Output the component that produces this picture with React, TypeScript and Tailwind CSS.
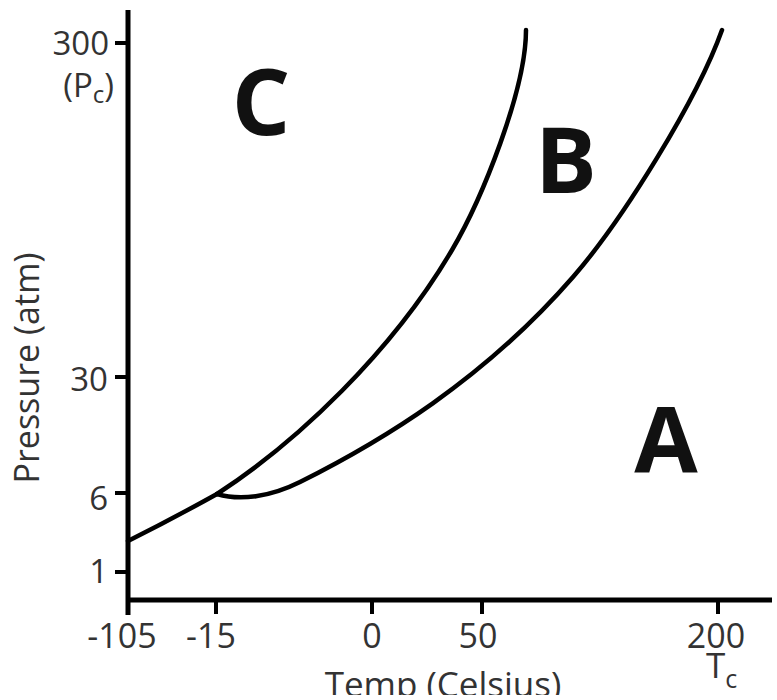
import React from "react";

const leftPath = "M128,541 Q172,519 217,494";
const upperPath = "M217,494 C297,442 392,352 452,250 C482,199 526,90 526,30";
const lowerPath =
  "M217,494 C240,501 270,497 300,482 C380,442 483,380.5 573,277 C623,219.5 697,100 722,30";

export default function App() {
  return (
    <div className="w-[777px] h-[700px] bg-white overflow-hidden">
      <svg
        width={777}
        height={695}
        viewBox="0 0 777 695"
        className="block font-['Open_Sans',sans-serif]"
      >
        {/* axes */}
        <line x1={128} y1={10} x2={128} y2={615} stroke="#000" strokeWidth={5} />
        <line x1={126} y1={600} x2={772} y2={600} stroke="#000" strokeWidth={5} />

        {/* y ticks */}
        {[43, 377, 493, 572].map((y) => (
          <line key={y} x1={115} y1={y} x2={128} y2={y} stroke="#000" strokeWidth={4} />
        ))}
        {/* x ticks */}
        {[216, 372, 482, 718].map((x) => (
          <line key={x} x1={x} y1={600} x2={x} y2={614} stroke="#000" strokeWidth={4} />
        ))}

        {/* curves */}
        <path d={leftPath} fill="none" stroke="#000" strokeWidth={4.5} strokeLinecap="round" />
        <path d={upperPath} fill="none" stroke="#000" strokeWidth={4.5} strokeLinecap="round" />
        <path d={lowerPath} fill="none" stroke="#000" strokeWidth={4.5} strokeLinecap="round" />

        {/* y labels */}
        <g fill="#333" fontSize={33}>
          <text x={109} y={55} textAnchor="end">300</text>
          <text x={114} y={97} textAnchor="end">
            (P<tspan fontSize={24} dy={6}>c</tspan><tspan dy={-6}>)</tspan>
          </text>
          <text x={108} y={391} textAnchor="end">30</text>
          <text x={108} y={510} textAnchor="end">6</text>
          <text x={108} y={583} textAnchor="end">1</text>
        </g>

        {/* x labels */}
        <g fill="#333" fontSize={34} textAnchor="middle">
          <text x={122} y={648}>-105</text>
          <text x={211} y={648}>-15</text>
          <text x={372} y={648}>0</text>
          <text x={478} y={648}>50</text>
          <text x={716} y={648}>200</text>
        </g>
        <text x={706} y={678} fill="#333" fontSize={35}>
          T<tspan fontSize={25} dy={10}>c</tspan>
        </text>
        <text x={443} y={697} fill="#333" fontSize={35} textAnchor="middle">
          Temp (Celsius)
        </text>
        <text
          transform="translate(39,368) rotate(-90)"
          fill="#333"
          fontSize={34}
          textAnchor="middle"
        >
          Pressure (atm)
        </text>

        {/* region letters */}
        <g fill="#111" fontSize={92} fontWeight={700} textAnchor="middle">
          <text x={261} y={135}>C</text>
          <text x={566} y={193}>B</text>
          <text x={666} y={473}>A</text>
        </g>
      </svg>
    </div>
  );
}
